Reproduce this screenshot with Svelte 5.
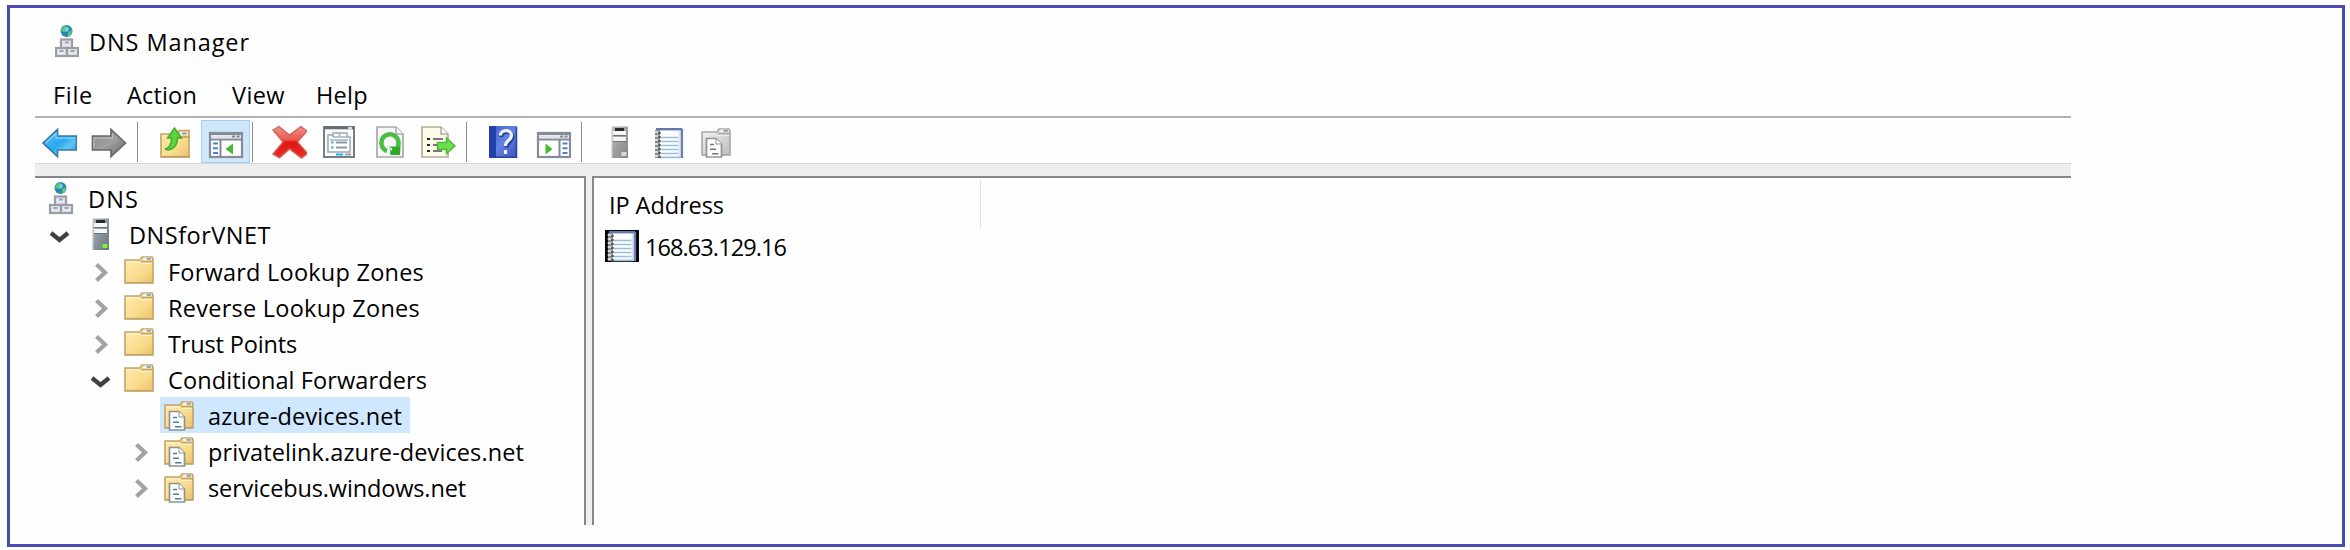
<script>
  const menus = [
    { label: 'File', width: 40 },
    { label: 'Action', width: 70 },
    { label: 'View', width: 53 },
    { label: 'Help', width: 52 }
  ];

  const tools = [
    { icon: 'back', gap: 6 },
    { icon: 'forward', gap: 14 },
    { icon: 'sep', gap: 10 },
    { icon: 'up', gap: 21 },
    { icon: 'tree', gap: 6, active: true },
    { icon: 'sep', gap: 2 },
    { icon: 'delete', gap: 18 },
    { icon: 'properties', gap: 15 },
    { icon: 'refresh', gap: 17 },
    { icon: 'export', gap: 9 },
    { icon: 'sep', gap: 10 },
    { icon: 'help', gap: 21 },
    { icon: 'actions', gap: 12 },
    { icon: 'sep', gap: 9 },
    { icon: 'server', gap: 28 },
    { icon: 'record', gap: 7 },
    { icon: 'zone', gap: 11 }
  ];

  const nodes = [
    { label: 'DNS', level: 0, icon: 'dns', width: 51 },
    { label: 'DNSforVNET', level: 1, icon: 'server', arrow: 'open', width: 142, tall: true },
    { label: 'Forward Lookup Zones', level: 2, icon: 'folder', arrow: 'closed', width: 256 },
    { label: 'Reverse Lookup Zones', level: 2, icon: 'folder', arrow: 'closed', width: 252 },
    { label: 'Trust Points', level: 2, icon: 'folder', arrow: 'closed', width: 129 },
    { label: 'Conditional Forwarders', level: 2, icon: 'folder', arrow: 'open', width: 259 },
    { label: 'azure-devices.net', level: 3, icon: 'zone', selected: true, width: 194 },
    { label: 'privatelink.azure-devices.net', level: 3, icon: 'zone', arrow: 'closed', width: 316 },
    { label: 'servicebus.windows.net', level: 3, icon: 'zone', arrow: 'closed', width: 258 }
  ];

  // Spreads a label's letters so that it fills the given width.
  function fit(node, width) {
    const natural = node.getBoundingClientRect().width;
    node.style.letterSpacing = `${(width - natural) / node.textContent.length}px`;
  }
</script>

{#snippet dnsIcon()}
  <circle cx="11.5" cy="7" r="6" fill="#2a87ad" />
  <path d="M7 4l4-3 1 4-3 3-3-1zM13 8l4-2-1 5-3 2z" fill="#5cc47e" />
  <path d="M11 3l3 1-1 3-3 1z" fill="#7fd6ee" />
  <g fill="#e4e6ed" stroke="#9b9da6" stroke-width="2.2">
    <rect x="6" y="15.500" width="11" height="8.500" />
    <rect x="1" y="24" width="11" height="8" />
    <rect x="12" y="24" width="11" height="8" />
  </g>
  <path d="M10 18.500h4M4.500 27h4M15.500 27h4" stroke="#a0a2ac" stroke-width="2" />
{/snippet}

{#snippet serverIcon(body, light)}
  <rect x="0.5" y="0.5" width="16.5" height="31.5" fill="url(#{body})" />
  <path d="M1 0.5v31.5" stroke="#fff" stroke-opacity=".35" stroke-width="1.5" />
  <rect x="2" y="5" width="13" height="4" fill="#f3f5f6" />
  <rect x="2" y="11" width="13" height="4" fill="#f3f5f6" />
  <rect x="4" y="2" width="9" height="3" fill="#252a2e" />
  <path d="M2 9.5h13M2 15.5h13" stroke="#6c7478" />
  <rect x="10.5" y="26" width="5" height="4" fill={light} />
{/snippet}

{#snippet folderIcon(fill, edge, tab)}
  <path d="M1 4h15l2-3h10l1 2v24h-28z" fill="url(#{fill})" stroke={edge} stroke-width="1.6" />
  <path d="M17 5.500h12" stroke={edge} stroke-width="1.6" />
  <rect x="19.5" y="1.6" width="8" height="2.6" fill="#f7f8f4" />
  <rect x="22.5" y="1.8" width="4.5" height="2" fill={tab} />
  <path d="M2.5 6h12.5l2 1.500h11" stroke="#fff" stroke-opacity=".6" fill="none" />
  <path d="M1 26.6h28" stroke={edge} stroke-width="1.4" />
{/snippet}

{#snippet pageIcon(edge, line)}
  <path d="M5.5 10.500h9.500l5.500 5.500v13h-15z" fill="#fff" stroke={edge} stroke-width="1.7" />
  <path d="M15 10.500v5.500h5.500" fill="#fff" stroke={edge} stroke-width="1" />
  <path d="M9 16.500h4M9 21.200h6M11 25.800h6.500" stroke={line} stroke-width="1.6" />
{/snippet}

{#snippet notebook()}
  <path d="M4 1h25v29H4z" fill="#fbfdff" />
  <path d="M3 1.2h26.2" stroke="#6477ab" stroke-width="2.4" />
  <path d="M28.8 1v29" stroke="#6c80b0" stroke-width="2.6" />
  <path d="M26.6 3v26" stroke="#dfe3f4" stroke-width="1.8" />
  <path d="M8 9.500h17.500M8 13.500h17.500M8 17.500h17.500M8 21.500h17.500M8 25.500h17.500M5 29.4h22" stroke="#9dbfd3" stroke-width="1.7" />
  <path d="M4.5 2v28" stroke="#8c8c8c" stroke-width="5" />
  <path d="M3.5 3v27" stroke="#d9d9d9" stroke-width="3.6" stroke-dasharray="2 2" />
  <path d="M6.5 4v26" stroke="#555" stroke-width="2.4" stroke-dasharray="2 2" />
{/snippet}

{#snippet windowFrame()}
  <rect x="2" y="15" width="32" height="24" fill="#fff" stroke="#868b97" stroke-width="2.2" />
  <path d="M1 16h34M1 21.5h34" stroke="#868b97" stroke-width="2" />
  <path d="M3 18.6h30" stroke="#dfe3ea" stroke-width="2.6" />
  <path d="M24 18.4h3M28.5 18.4h3" stroke="#7f8797" stroke-width="2" />
{/snippet}

{#snippet toolIcon(kind)}
  {#if kind === 'back'}
    <path d="M2 25L16.500 11.500V18H35.500V32H16.500V38.500z" fill="url(#blueArrow)" stroke="#3379ad" stroke-width="1.7" />
    <path d="M5 25L15 15.500V20H34" fill="none" stroke="#7ed0fa" stroke-width="1.4" />
  {:else if kind === 'forward'}
    <path d="M34.500 25L20 11.500V18H1.500V32H20V38.500z" fill="url(#greyArrow)" stroke="#686868" stroke-width="1.7" />
    <path d="M3 30.500V20H21.500V15.500" fill="none" stroke="#bababa" stroke-width="1.3" />
  {:else if kind === 'up'}
    <path d="M2 16h16l2-3.500h10v26.500H2z" fill="url(#gold)" stroke="#c4a567" stroke-width="1.6" />
    <rect x="21" y="14" width="8" height="3" fill="#e8eef4" />
    <rect x="23.500" y="14.500" width="4" height="2" fill="#6b98c1" />
    <path d="M17 19h14M2 38.700h29" stroke="#bd9c5c" stroke-width="1.500" />
    <path d="M6 31c5-1 6.500-6 6.500-11H8.500l7-10 7 10h-4c0 6-3 11-9 12z" fill="#5fd145" stroke="#43ad32" stroke-width="1.500" />
  {:else if kind === 'tree'}
    {@render windowFrame()}
    <path d="M12.500 22v17" stroke="#7e8796" stroke-width="2" />
    <path d="M5 25.500h5M5 30.200h5M5 35h5" stroke="#4b80c5" stroke-width="2" />
    <path d="M25 25.500v11l-7.500-5.500z" fill="#49b833" />
  {:else if kind === 'actions'}
    {@render windowFrame()}
    <path d="M23.500 22v17" stroke="#7e8796" stroke-width="2" />
    <path d="M26.500 25.500h5M26.500 30.200h5M26.500 35h5" stroke="#4b80c5" stroke-width="2" />
    <path d="M9.500 25.500v11l7-5.500z" fill="#49b833" />
  {:else if kind === 'delete'}
    <path d="M2 12l6-3.500 10.500 8.500L30 8.500l6 4.500-9.500 11 10 11.500-6 4.500-12-9-10 9-6.500-4L12 24z" fill="url(#red)" stroke="#d7605a" stroke-width="1.4" />
  {:else if kind === 'properties'}
    <rect x="2" y="9" width="30" height="30" fill="#f7f8f9" stroke="#777e87" stroke-width="2" />
    <path d="M2 10h30" stroke="#626a73" stroke-width="2.500" />
    <path d="M26 10h4" stroke="#fff" stroke-width="1.500" />
    <path d="M6 34V17h5v-2h14v4h3v15z" fill="#fff" stroke="#9ca8b3" stroke-width="1.5" />
    <path d="M11 15v4h14M17.500 15v4M8 22h18" stroke="#a4b0ba" fill="none" stroke-width="1.500" />
    <path d="M14 24.500h11M14 29.500h11" stroke="#8d969d" stroke-width="1.800" />
    <path d="M9 24.500h2.500M9 29.500h2.500" stroke="#2fb5db" stroke-width="2" />
    <path d="M14 36.500h7" stroke="#25b5e8" stroke-width="2" /><path d="M23 36.500h6" stroke="#9ba3aa" stroke-width="2" />
  {:else if kind === 'refresh'}
    <path d="M2 9h19l7 7v23H2z" fill="#f7f7f8" stroke="#a9a9ad" stroke-width="1.700" />
    <path d="M21 9v7h7" fill="#fff" stroke="#a9a9ad" stroke-width="1.500" />
    <path d="M12 33A8.600 8.600 0 1 1 22.500 29" fill="none" stroke="#4abe43" stroke-width="4.500" />
    <path d="M14.500 28.500h11l-.5 8.500h-9.500z" fill="#32a72d" />
    <path d="M14.500 29l3 1.500-1.500 3z" fill="#f7f7f8" />
  {:else if kind === 'export'}
    <path d="M2 9h19l7 7v23H2z" fill="#fffbe9" stroke="#b3ad9c" stroke-width="1.700" />
    <path d="M21 9v7h7" fill="#fff" stroke="#aaa" stroke-width="1.500" />
    <path d="M7 21h3M7 27h3M7 33h3" stroke="#252525" stroke-width="2" />
    <path d="M13 21h10M13 27h5M13 33h9" stroke="#7b747c" stroke-width="1.800" />
    <path d="M17.500 24.500h9v-4.500l8.500 8-8.500 7.500v-4h-9z" fill="#6cdd4c" stroke="#4dba38" stroke-width="1.500" />
  {:else if kind === 'help'}
    <rect x="1" y="8" width="28" height="32" fill="url(#book)" />
    <rect x="1" y="8" width="7" height="32" fill="#243fa8" />
    <path d="M2 39.300h26.500V9" fill="none" stroke="#27439f" stroke-width="1.500" />
    <path d="M12.500 18c0-7 11-7 11 0 0 5-6 4.500-6 10.500" fill="none" stroke="#263d94" stroke-width="4" transform="translate(1 1)" />
    <path d="M12.500 17.500c0-6.500 11-6.500 11 0 0 5-6 4.500-6 10.500M17.500 32v4" fill="none" stroke="#f0f3ff" stroke-width="3.200" />
  {:else if kind === 'server'}
    <g transform="translate(1 8)">{@render serverIcon('greyServer', '#d9d9d9')}</g>
  {:else if kind === 'record'}
    <g transform="translate(0 10)">{@render notebook()}</g>
  {:else if kind === 'zone'}
    <g transform="translate(1 10)">
      {@render folderIcon('greyFolder', '#a8a8a8', '#999')}
      {@render pageIcon('#929292', '#777')}
    </g>
  {/if}
{/snippet}

<svg class="defs" width="0" height="0" aria-hidden="true">
  <defs>
    <linearGradient id="gold" x2="1" y2="1"><stop offset="0" stop-color="#ffecae" /><stop offset=".6" stop-color="#f9dc8c" /><stop offset="1" stop-color="#e9c16a" /></linearGradient>
    <linearGradient id="greyFolder" x2="1" y2="1"><stop offset="0" stop-color="#f2f2f2" /><stop offset="1" stop-color="#bdbdbd" /></linearGradient>
    <linearGradient id="blueArrow" x2="1" y2="1"><stop offset="0" stop-color="#63c6f8" /><stop offset=".5" stop-color="#29a7ed" /><stop offset=".7" stop-color="#60c5f5" /><stop offset="1" stop-color="#1d8ad2" /></linearGradient>
    <linearGradient id="greyArrow" x2="1" y2="1"><stop offset="0" stop-color="#888" /><stop offset=".5" stop-color="#a0a0a0" /><stop offset="1" stop-color="#686868" /></linearGradient>
    <linearGradient id="red" x2="0" y2="1"><stop offset="0" stop-color="#f0928b" /><stop offset=".42" stop-color="#e95750" /><stop offset=".5" stop-color="#df1511" /><stop offset="1" stop-color="#e93228" /></linearGradient>
    <linearGradient id="book" x2="1" y2="1"><stop offset="0" stop-color="#3c5ccb" /><stop offset=".5" stop-color="#6482e4" /><stop offset="1" stop-color="#3452bd" /></linearGradient>
    <linearGradient id="steel" x2="1" y2="1"><stop offset="0" stop-color="#aeb7bc" /><stop offset="1" stop-color="#66747b" /></linearGradient>
    <linearGradient id="greyServer" x2="1" y2="1"><stop offset="0" stop-color="#b9b9b9" /><stop offset="1" stop-color="#858585" /></linearGradient>
  </defs>
</svg>

<div class="frame">
  <header class="title">
    <svg width="24" height="34" viewBox="0 0 24 34">{@render dnsIcon()}</svg>
    <h1><span use:fit={161}>DNS Manager</span></h1>
  </header>

  <nav class="menu">
    {#each menus as m (m.label)}
      <span class="entry {m.label.toLowerCase()}"><span use:fit={m.width}>{m.label}</span></span>
    {/each}
  </nav>

  <div class="toolbar">
    {#each tools as t}
      {#if t.icon === 'sep'}
        <i class="sep" style="margin-left: {t.gap}px"></i>
      {:else}
        <span class="tool" class:active={t.active} style="margin-left: {t.gap}px">
          <svg width="36" height="45" viewBox="0 0 36 45">{@render toolIcon(t.icon)}</svg>
        </span>
      {/if}
    {/each}
  </div>
  <div class="band"></div>

  <main class="panes">
    <section class="tree">
      {#each nodes as n (n.label)}
        <div class="row level{n.level}" class:tall={n.tall}>
          {#if n.level > 0}
            <span class="arrow">
              {#if n.arrow === 'open'}
                <svg width="20" height="36" viewBox="0 0 20 36"><path d="M1 17L9.500 24L18 17" fill="none" stroke="#404040" stroke-width="4.300" /></svg>
              {:else if n.arrow === 'closed'}
                <svg width="20" height="36" viewBox="0 0 20 36"><path d="M5.500 11.500L14 19.500L5.500 27.500" fill="none" stroke="#a2a2a2" stroke-width="4.200" /></svg>
              {/if}
            </span>
          {/if}
          <span class="node" class:selected={n.selected}>
            <svg class="glyph" width="32" height="36" viewBox="0 0 32 36">
              {#if n.icon === 'dns'}
                <g transform="translate(5 1)">{@render dnsIcon()}</g>
              {:else if n.icon === 'server'}
                <g transform="translate(7 2)">{@render serverIcon('steel', '#7ff02f')}</g>
              {:else if n.icon === 'folder'}
                <g transform="translate(0 3)">{@render folderIcon('gold', '#c2a468', '#8aa5b5')}</g>
              {:else}
                <g transform="translate(0 4)">
                  {@render folderIcon('gold', '#c2a468', '#8aa5b5')}
                  {@render pageIcon('#8d9296', '#4a7d9c')}
                </g>
              {/if}
            </svg>
            <span class="label"><span use:fit={n.width}>{n.label}</span></span>
          </span>
        </div>
      {/each}
    </section>

    <section class="list">
      <div class="head"><span use:fit={115}>IP Address</span></div>
      <div class="item">
        <svg width="34" height="32" viewBox="0 0 34 32">
          <rect width="34" height="32" fill="#05060c" />
          <g transform="translate(1 1)">{@render notebook()}</g>
        </svg>
        <span use:fit={141}>168.63.129.16</span>
      </div>
    </section>
  </main>
</div>

<style>
  :global(body) {
    margin: 0;
    background: #fff;
  }
  .defs {
    display: block;
    height: 0;
  }
  .frame {
    box-sizing: border-box;
    width: 2338px;
    height: 542px;
    margin: 5px 0 0 7px;
    border: 3px solid #444cb4;
    background: #fefefe;
    padding-left: 25px;
    font: 23.5px/38px 'Open Sans', 'Noto Sans', sans-serif;
    color: #000;
    white-space: nowrap;
  }
  svg {
    display: block;
    flex: none;
  }
  .title {
    display: flex;
    height: 63px;
    padding: 16px 0 0 20px;
    box-sizing: border-box;
  }
  h1 {
    margin: -1px 0 0 10px;
    font: inherit;
  }
  .menu {
    display: flex;
    height: 45px;
    padding-left: 18px;
    box-sizing: border-box;
    padding-top: 5px;
  }
  .file { width: 74px; }
  .action { width: 105px; }
  .view { width: 84px; }
  .toolbar {
    display: flex;
    box-sizing: border-box;
    width: 2036px;
    height: 47px;
    border-top: 2px solid #b1b1b3;
  }
  .sep {
    width: 1px;
    height: 40px;
    margin-top: 4px;
    background: #8c8c8c;
  }
  .active {
    box-sizing: border-box;
    width: 49px;
    height: 43px;
    margin-top: 2px;
    padding-left: 6px;
    border: 1px solid #a4cfee;
    background: #cfe7fb;
  }
  .active svg {
    margin-top: -3px;
  }
  .band {
    box-sizing: border-box;
    width: 2036px;
    height: 13px;
    border-top: 1px solid #d8d8d8;
    background: #eee;
  }
  .panes {
    display: flex;
    width: 2036px;
    height: 349px;
    background: #edeff1;
    gap: 6px;
  }
  .tree,
  .list {
    box-sizing: border-box;
    border-top: 2px solid #86878b;
    background: #fefefe;
  }
  .tree {
    width: 551px;
    border-right: 2px solid #86878b;
    padding-top: 2px;
  }
  .row {
    display: flex;
    height: 36px;
  }
  .tall {
    height: 37px;
  }
  .level0 { padding-left: 9px; }
  .level1 { padding-left: 7px; }
  .level2 { padding-left: 48px; }
  .level3 { padding-left: 88px; }
  .arrow {
    width: 38px;
    padding-left: 8px;
    box-sizing: border-box;
    margin-right: -1px;
  }
  .level1 .arrow {
    width: 40px;
  }
  .node {
    display: flex;
    height: 36px;
    padding: 0 8px 0 4px;
  }
  .level0 .node {
    padding-left: 0;
  }
  .selected {
    box-sizing: border-box;
    width: 250px;
    background: #cfe7ff;
  }
  .label {
    margin-left: 12px;
  }
  .list {
    flex: 1;
    border-left: 2px solid #86878b;
  }
  .head {
    box-sizing: border-box;
    width: 387px;
    height: 48px;
    margin-top: 2px;
    padding: 6px 0 0 15px;
    border-right: 1px solid #e2e2e2;
  }
  .item {
    display: flex;
    gap: 6px;
    height: 36px;
    padding: 0 0 0 11px;
  }
  .item svg {
    margin-top: 2px;
  }
</style>
